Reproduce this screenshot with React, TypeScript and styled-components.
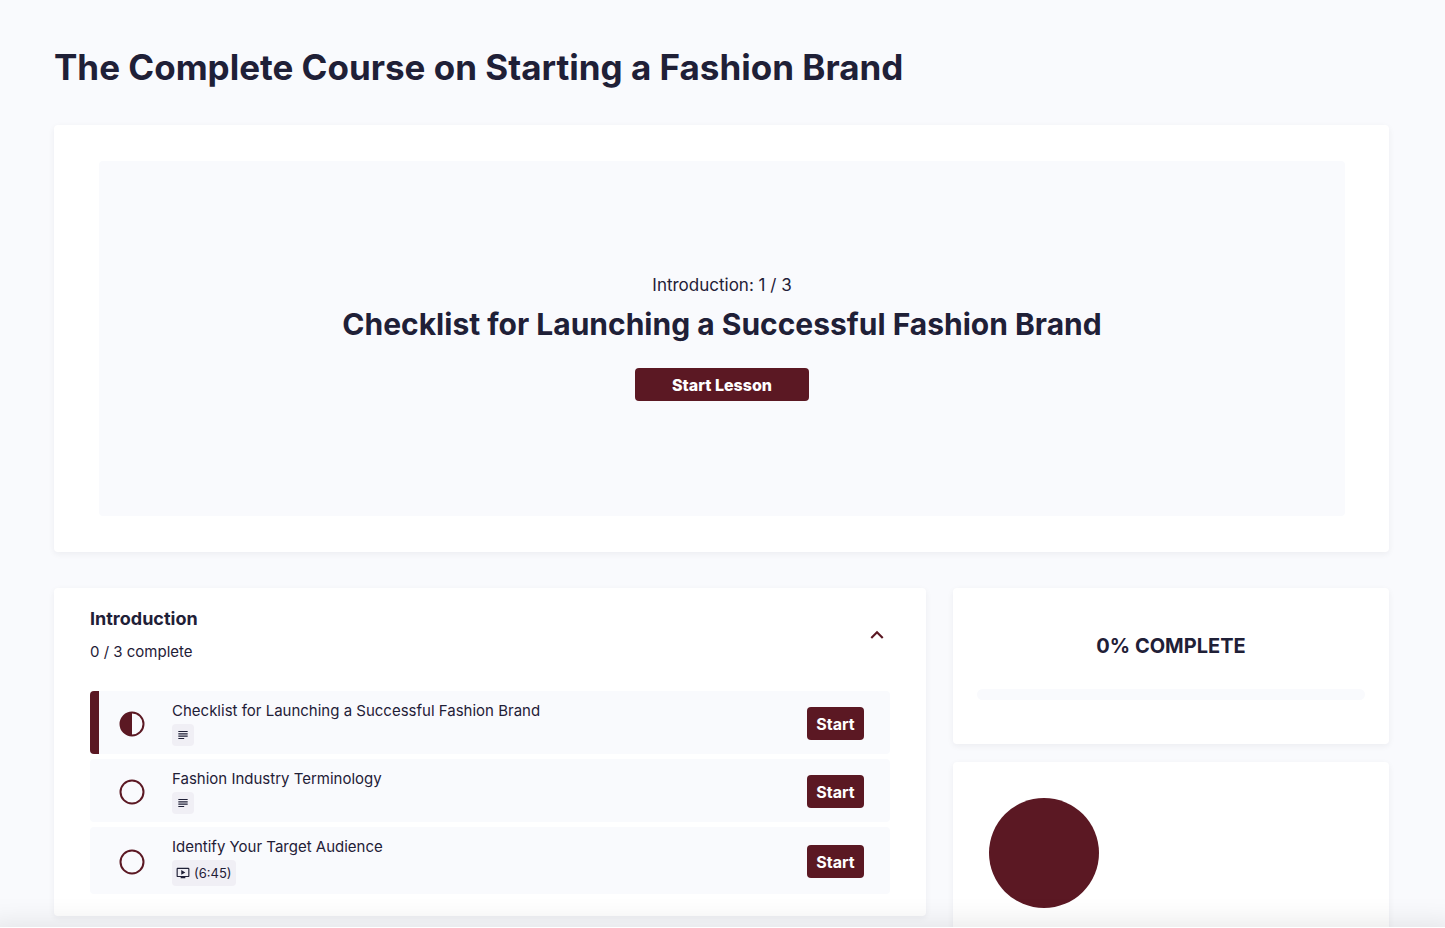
import React, { useState } from "react";
import styled, { createGlobalStyle } from "styled-components";
import { MdExpandLess, MdOndemandVideo, MdSubject } from "react-icons/md";

const ink = "#1f2037";
const maroon = "#5b1823";
const mist = "#f9fafd";

const GlobalStyle = createGlobalStyle`
  * { box-sizing: border-box; }
  body {
    margin: 0;
    background: ${mist};
    color: ${ink};
    font-family: Inter, "Liberation Sans", sans-serif;
  }
  h1, h2, h3, p, ul { margin: 0; padding: 0; }
`;

const Shell = styled.div`
  display: flex;
  flex-direction: column;
  height: 100vh;
  overflow: hidden;
`;

const Scroller = styled.main`
  flex: 1;
  min-height: 0;
  overflow: hidden auto;
  scrollbar-width: none;
  padding: 43px 56px 40px 54px;
`;

const BottomBar = styled.footer`
  position: relative;
  height: 1px;
  background: #fff;
  box-shadow: 0 16px 32px 16px rgba(0, 0, 0, 0.12);
`;

const PageTitle = styled.h1`
  font-size: 35px;
  line-height: 48px;
  font-weight: 700;
`;

const Card = styled.section`
  background: #fff;
  border-radius: 4px;
  box-shadow: 0 2px 6px rgba(31, 32, 55, 0.06);
`;

const HeroCard = styled(Card)`
  margin-top: 34px;
  padding: 36px 44px 36px 45px;
`;

const Hero = styled.div`
  display: flex;
  flex-direction: column;
  align-items: center;
  padding: 111px 24px 115px;
  border-radius: 4px;
  background: ${mist};
  text-align: center;
`;

const HeroStep = styled.p`
  font-size: 17px;
  line-height: 26px;
`;

const HeroTitle = styled.h2`
  margin: 6px 0 24px;
  font-size: 30px;
  line-height: 40px;
  font-weight: 700;
`;

const Button = styled.button<{ $wide?: boolean }>`
  flex: none;
  height: 33px;
  width: ${(p) => (p.$wide ? "174px" : "57px")};
  padding: 0;
  border: 0;
  border-radius: 4px;
  background: ${maroon};
  color: #fff;
  font-family: inherit;
  font-size: 16px;
  line-height: 20px;
  font-weight: ${(p) => (p.$wide ? 800 : 700)};
  cursor: pointer;
`;

const Columns = styled.div`
  display: grid;
  grid-template-columns: 2fr 1fr;
  gap: 27px;
  align-items: start;
  margin-top: 36px;
`;

const Aside = styled.aside`
  display: flex;
  flex-direction: column;
  gap: 18px;
`;

const ModuleCard = styled(Card)`
  padding: 18px 36px 22px;
`;

const ModuleHeader = styled.header`
  display: flex;
  align-items: center;
  justify-content: space-between;
  margin-bottom: 27px;
`;

const ModuleTitle = styled.h3`
  margin-bottom: 8px;
  font-size: 18px;
  line-height: 26px;
  font-weight: 700;
`;

const ModuleCount = styled.p`
  font-size: 15px;
  line-height: 24px;
`;

const Toggle = styled.button<{ $open: boolean }>`
  display: flex;
  padding: 0;
  border: 0;
  background: none;
  color: ${maroon};
  cursor: pointer;
  svg { transform: rotate(${(p) => (p.$open ? 0 : 180)}deg); }
`;

const Lessons = styled.ul`
  display: flex;
  flex-direction: column;
  gap: 5px;
  list-style: none;
`;

const Lesson = styled.li<{ $current?: boolean }>`
  display: flex;
  align-items: center;
  padding: 10px 26px 8px 20px;
  border-left: 9px solid ${(p) => (p.$current ? maroon : mist)};
  border-radius: 4px;
  background: ${mist};
`;

const LessonBody = styled.div`
  display: flex;
  flex: 1;
  flex-direction: column;
  align-items: flex-start;
  gap: 3px;
  margin-left: 27px;
`;

const LessonLink = styled.a`
  color: inherit;
  font-size: 15px;
  line-height: 20px;
  text-decoration: none;
`;

const Badge = styled.span<{ $timed?: boolean }>`
  display: flex;
  align-items: center;
  gap: 4px;
  height: ${(p) => (p.$timed ? "26px" : "22px")};
  padding: 0 4px;
  border-radius: 4px;
  background: #f0eff5;
  font-size: 13px;
`;

const ProgressCard = styled(Card)`
  padding: 45px 24px 44px;
`;

const ProgressTitle = styled.h3`
  margin-bottom: 29px;
  font-size: 20px;
  line-height: 27px;
  font-weight: 700;
  text-align: center;
`;

const Track = styled.div`
  height: 11px;
  border-radius: 6px;
  background: ${mist};
  overflow: hidden;
`;

const Fill = styled.div`
  height: 100%;
  background: ${maroon};
`;

const AuthorCard = styled(Card)`
  padding: 36px;
`;

const Avatar = styled.div`
  width: 110px;
  height: 110px;
  border-radius: 50%;
  background: ${maroon};
`;

const Status = ({ half }: { half?: boolean }) => (
  <svg width="26" height="26" viewBox="0 0 26 26" aria-hidden="true">
    <circle cx="13" cy="13" r="11.5" fill="none" stroke={maroon} strokeWidth="2" />
    {half && <path d="M13 1.5a11.5 11.5 0 0 0 0 23z" fill={maroon} />}
  </svg>
);

interface LessonItem {
  title: string;
  duration?: string;
  current?: boolean;
}

const lessons: LessonItem[] = [
  { title: "Checklist for Launching a Successful Fashion Brand", current: true },
  { title: "Fashion Industry Terminology" },
  { title: "Identify Your Target Audience", duration: "(6:45)" },
];

export default function App() {
  const [open, setOpen] = useState(true);
  const progress = 0;

  return (
    <Shell>
      <GlobalStyle />
      <Scroller>
        <PageTitle>The Complete Course on Starting a Fashion Brand</PageTitle>
        <HeroCard>
          <Hero>
            <HeroStep>Introduction: 1 / 3</HeroStep>
            <HeroTitle>Checklist for Launching a Successful Fashion Brand</HeroTitle>
            <Button $wide>Start Lesson</Button>
          </Hero>
        </HeroCard>
        <Columns>
          <ModuleCard>
            <ModuleHeader>
              <div>
                <ModuleTitle>Introduction</ModuleTitle>
                <ModuleCount>0 / 3 complete</ModuleCount>
              </div>
              <Toggle
                $open={open}
                aria-label="Toggle Introduction"
                aria-expanded={open}
                onClick={() => setOpen(!open)}
              >
                <MdExpandLess size={26} />
              </Toggle>
            </ModuleHeader>
            {open && (
              <Lessons>
                {lessons.map((lesson) => (
                  <Lesson key={lesson.title} $current={lesson.current}>
                    <Status half={lesson.current} />
                    <LessonBody>
                      <LessonLink href="#">{lesson.title}</LessonLink>
                      <Badge $timed={!!lesson.duration}>
                        {lesson.duration ? <MdOndemandVideo size={14} /> : <MdSubject size={14} />}
                        {lesson.duration}
                      </Badge>
                    </LessonBody>
                    <Button>Start</Button>
                  </Lesson>
                ))}
              </Lessons>
            )}
          </ModuleCard>
          <Aside>
            <ProgressCard>
              <ProgressTitle>{progress}% COMPLETE</ProgressTitle>
              <Track>
                <Fill style={{ width: `${progress}%` }} />
              </Track>
            </ProgressCard>
            <AuthorCard>
              <Avatar />
            </AuthorCard>
          </Aside>
        </Columns>
      </Scroller>
      <BottomBar />
    </Shell>
  );
}
